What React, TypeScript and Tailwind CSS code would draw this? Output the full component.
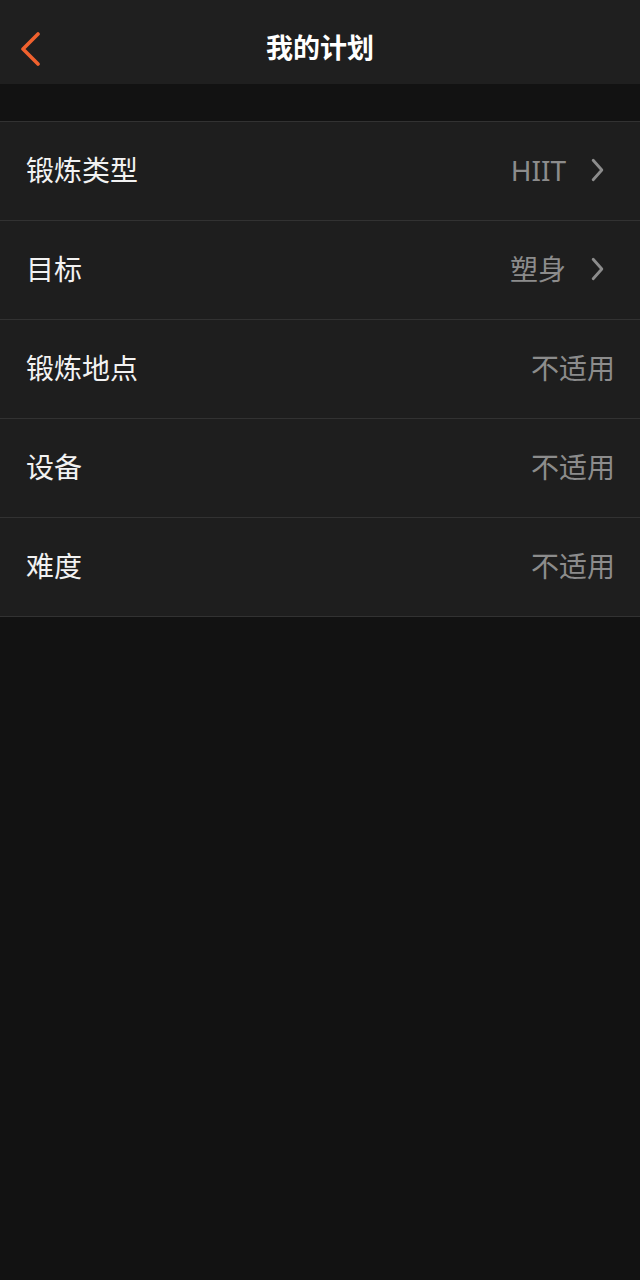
import React from 'react';

interface PlanRowProps {
  label: string;
  value: string;
  hasArrow?: boolean;
}

const Chevron: React.FC<{ className?: string }> = ({ className }) => (
  <svg viewBox="0 0 12 22" className={className} fill="none" stroke="currentColor" strokeWidth="2.6" strokeLinecap="round" strokeLinejoin="round">
    <path d="M2 2l8 9-8 9" />
  </svg>
);

const PlanRow: React.FC<PlanRowProps> = ({ label, value, hasArrow = false }) => {
  return (
    <div className="h-[99px] flex items-center border-b border-[#323232] bg-[#1e1e1e] pl-[26px] pr-[25px] pb-[2px]">
      <div className="flex-1 text-[28px] text-[#f2f2f2]">{label}</div>
      <div className="flex items-center">
        <span className="text-[28px] text-[#8c8c8c]">{value}</span>
        {hasArrow && <Chevron className="w-[13px] h-[24px] ml-[25px] mr-[11px] text-[#8c8c8c]" />}
      </div>
    </div>
  );
};

const App = () => {
  const rows = [
    { id: 'type', label: '锻炼类型', value: 'HIIT', hasArrow: true },
    { id: 'goal', label: '目标', value: '塑身', hasArrow: true },
    { id: 'place', label: '锻炼地点', value: '不适用' },
    { id: 'device', label: '设备', value: '不适用' },
    { id: 'level', label: '难度', value: '不适用' },
  ];

  return (
    <div
      className="w-[640px] h-[1280px] bg-[#121212]"
      style={{ fontFamily: '"Noto Sans", "Noto Sans CJK SC", sans-serif' }}
    >
      {/* Header */}
      <div className="relative h-[84px] bg-[#1f1f1f] flex items-center justify-center pt-[12px]">
        <button className="absolute left-[20px] top-[32px] text-[#f0612e]">
          <svg viewBox="0 0 22 34" className="w-[22px] h-[34px]" fill="none" stroke="currentColor" strokeWidth="3.6" strokeLinecap="round" strokeLinejoin="round">
            <path d="M18 2L3 17l15 15" />
          </svg>
        </button>
        <h1 className="text-[27px] font-bold text-white">我的计划</h1>
      </div>

      <div className="h-[37px]" />

      <div className="border-t border-[#323232]">
        {rows.map((row) => (
          <PlanRow key={row.id} label={row.label} value={row.value} hasArrow={row.hasArrow} />
        ))}
      </div>
    </div>
  );
};

export default App;
